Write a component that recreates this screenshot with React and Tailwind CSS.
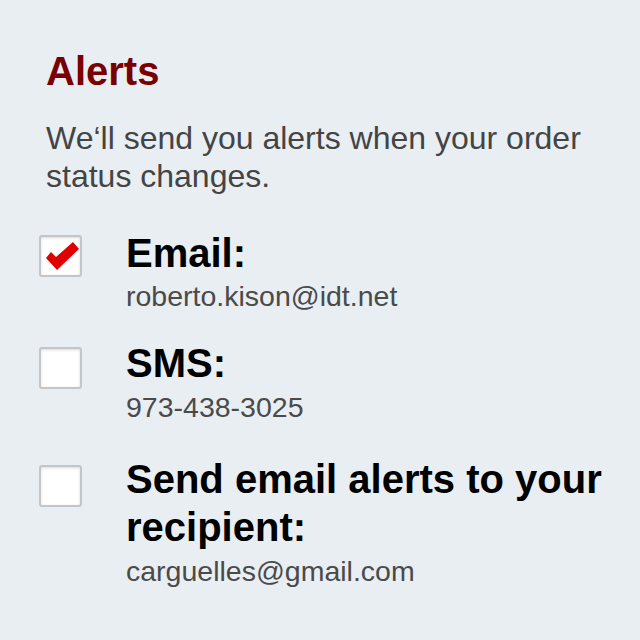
import React from "react";

function Check({ checked }) {
  return (
    <div className="relative w-[43px] h-[42px] shrink-0 rounded-[3px] border-2 border-[#c3c6c8] bg-white shadow-[inset_0_1px_3px_rgba(0,0,0,0.15)]">
      {checked && (
        <svg className="absolute left-0 top-0 overflow-visible" width="39" height="38" viewBox="0 0 39 38">
          <path d="M5 21 L10 15 L15 20 L32 5 L38 12 L16 33 Z" fill="#e00000" />
        </svg>
      )}
    </div>
  );
}

function Row({ checked, label, sub, rowClass, boxClass, subClass }) {
  return (
    <div className={"flex -ml-[7px] " + rowClass}>
      <div className={boxClass}>
        <Check checked={checked} />
      </div>
      <div className="ml-[44px] flex flex-col">
        <div className="text-[40px] leading-[48px] font-bold text-black">{label}</div>
        <div className={"text-[28.5px] leading-[36px] text-[#4a4a4a] " + subClass}>{sub}</div>
      </div>
    </div>
  );
}

export default function App() {
  return (
    <div
      className="w-[640px] h-[640px] bg-[#e9eef3] pl-[46px] pr-[10px] pt-[51px] overflow-hidden"
      style={{ fontFamily: '"Liberation Sans", Arial, sans-serif' }}
    >
      <h1 className="text-[40px] leading-[40px] font-bold text-[#7a0000]">Alerts</h1>
      <p className="mt-[28px] text-[32px] leading-[38px] text-[#444444]">
        We‘ll send you alerts when your order status changes.
      </p>
      <Row checked label="Email:" sub="roberto.kison@idt.net" rowClass="mt-[34px]" boxClass="mt-[6px]" subClass="mt-[1px]" />
      <Row label="SMS:" sub="973-438-3025" rowClass="mt-[25px]" boxClass="mt-[8px]" subClass="mt-[2px]" />
      <Row label="Send email alerts to your recipient:" sub="carguelles@gmail.com" rowClass="mt-[30px]" boxClass="mt-[10px]" subClass="mt-[2px]" />
    </div>
  );
}
